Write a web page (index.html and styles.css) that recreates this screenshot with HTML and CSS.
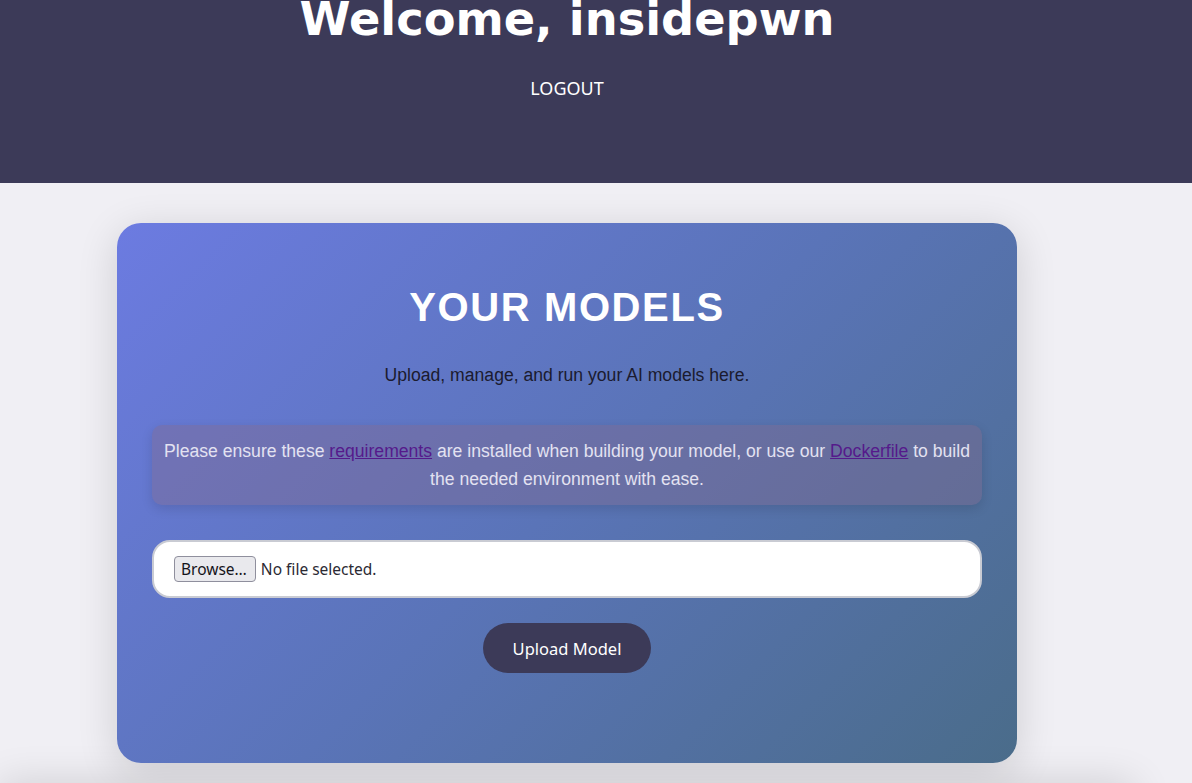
FILE: index.html
```html
<!DOCTYPE html>
<html lang="en">
<head>
<meta charset="utf-8">
<title>Your Models</title>
<link rel="stylesheet" href="styles.css">
</head>
<body>
<header class="site-header">
  <div class="col">
    <h1 class="welcome">Welcome, insidepwn</h1>
    <a class="logout" href="#">LOGOUT</a>
  </div>
</header>
<main class="col main">
  <section class="card">
    <h2 class="card-title">YOUR MODELS</h2>
    <p class="card-sub">Upload, manage, and run your AI models here.</p>
    <div class="notice">Please ensure these <a href="#">requirements</a> are installed when building your model, or use our <a href="#">Dockerfile</a> to build the needed environment with ease.</div>
    <form class="upload-form">
      <label class="file-field">
        <span class="browse-btn">Browse…</span>
        <span class="file-name">No file selected.</span>
      </label>
      <button type="button" class="upload-btn">Upload Model</button>
    </form>
  </section>
</main>
<footer class="col footer"></footer>
</body>
</html>
```
FILE: styles.css
```css
html, body {
  margin: 0;
  padding: 0;
}
body {
  background: #f0eff4;
  font-family: "Liberation Sans", Arial, sans-serif;
  overflow: hidden;
  height: 783px;
}
.col {
  width: 1134px;
}
.site-header {
  background: #3c3a58;
  height: 183px;
}
.site-header .col {
  display: flex;
  flex-direction: column;
  align-items: center;
}
.welcome {
  margin: -8px 0 0;
  font-family: "DejaVu Sans", sans-serif;
  font-weight: bold;
  font-size: 46.3px;
  color: #ffffff;
  line-height: normal;
}
.logout {
  margin-top: 30px;
  font-family: "Noto Sans", sans-serif;
  font-size: 18px;
  color: #ffffff;
  text-decoration: none;
}
.main {
  display: flex;
  justify-content: center;
  padding-top: 40px;
}
.card {
  width: 900px;
  height: 540px;
  box-sizing: border-box;
  padding: 40px 35px;
  border-radius: 24px;
  background: linear-gradient(135deg, #6c7be1 0%, #5a74b8 50%, #4a6c8a 100%);
  box-shadow: 0 8px 40px rgba(0, 0, 0, 0.14);
  display: flex;
  flex-direction: column;
  align-items: stretch;
  text-align: center;
}
.card-title {
  margin: 21px 0 0;
  font-size: 40px;
  font-weight: bold;
  letter-spacing: 1.6px;
  color: #ffffff;
  line-height: 46px;
}
.card-sub {
  margin: 35px 0 0;
  font-size: 17.6px;
  color: #1b1b2f;
  line-height: 21px;
}
.notice {
  margin-top: 39px;
  padding: 12px 10px;
  border-radius: 10px;
  background: rgba(130, 104, 140, 0.4);
  box-shadow: 0 4px 12px rgba(0, 0, 0, 0.12);
  color: #e3e2f1;
  font-size: 17.6px;
  line-height: 28px;
}
.notice a {
  color: #551a8b;
  text-decoration: underline;
}
.upload-form {
  display: flex;
  flex-direction: column;
  align-items: center;
  margin-top: 35px;
}
.file-field {
  align-self: stretch;
  display: flex;
  align-items: center;
  gap: 5px;
  background: #ffffff;
  border: 2px solid #c9cbd3;
  border-radius: 18px;
  padding: 14px 20px;
  text-align: left;
  cursor: pointer;
}
.browse-btn {
  height: 26px;
  box-sizing: border-box;
  display: inline-flex;
  align-items: center;
  padding: 0 8px 0 6px;
  background: #e9e9ed;
  border: 1px solid #8f8f9d;
  border-radius: 4px;
  font-family: "Noto Sans", sans-serif;
  font-size: 15.5px;
  color: #15141a;
}
.file-name {
  font-family: "Noto Sans", sans-serif;
  font-size: 15.5px;
  color: #2b2a33;
}
.upload-btn {
  margin-top: 25px;
  height: 50px;
  width: 168px;
  border: none;
  border-radius: 25px;
  background: #3c3a58;
  color: #ffffff;
  font-family: "Noto Sans", sans-serif;
  font-size: 16.5px;
  cursor: pointer;
}
.footer {
  margin-top: 20px;
  height: 40px;
  background: #f0eff4;
  box-shadow: 0 0 40px rgba(0, 0, 0, 0.14);
}
```
